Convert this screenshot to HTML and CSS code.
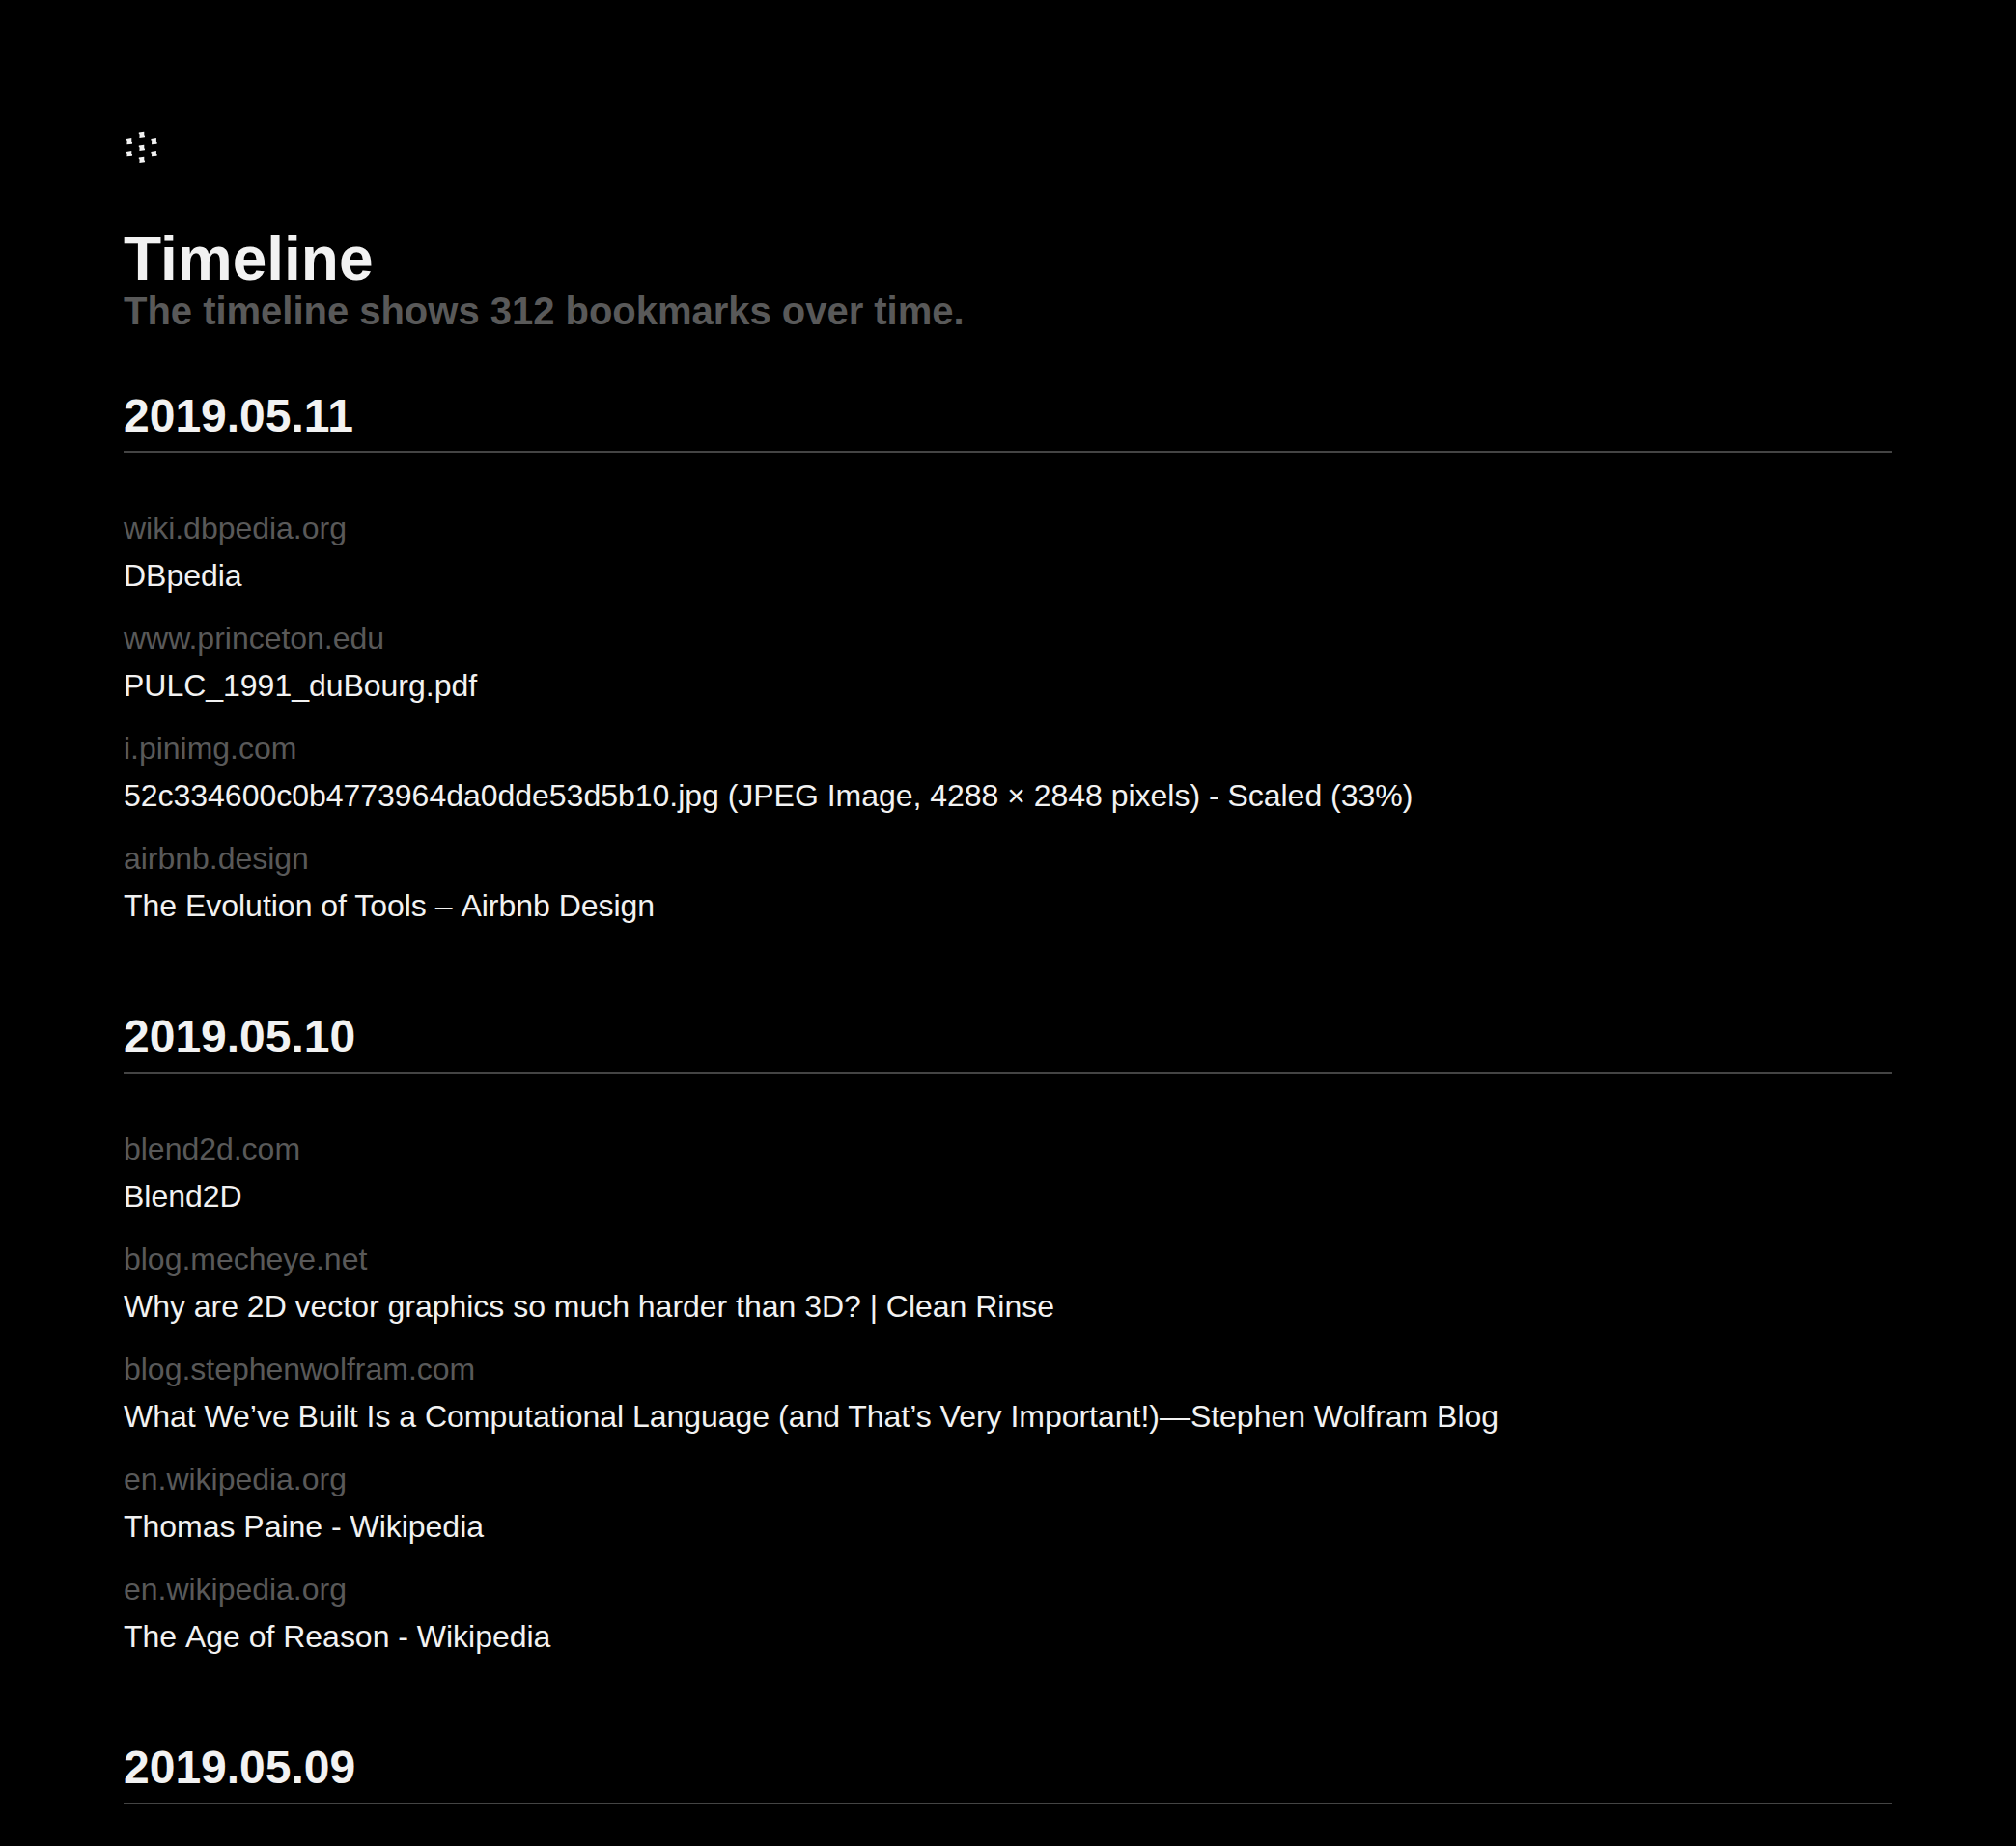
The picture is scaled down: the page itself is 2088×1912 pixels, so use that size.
FILE: index.html
```html
<!DOCTYPE html>
<html lang="en">
<head>
<meta charset="utf-8">
<title>Timeline</title>
<link rel="stylesheet" href="styles.css">
</head>
<body>
<main class="page">
  <header class="header">
    <svg class="logo" viewBox="0 0 36 34" role="img" aria-label="Home">
      <defs><path id="dot" d="M-3.1-2.3 2.4-3.1 2.4.6 3.2 1 3 2.5-2.5 3.1-2.3-.4-3.1-.8Z"/></defs>
      <use href="#dot" x="18.9" y="3.8"/>
      <use href="#dot" x="5.9" y="10.2"/>
      <use href="#dot" x="31.5" y="10.2"/>
      <use href="#dot" x="18.9" y="16.8"/>
      <use href="#dot" x="5.9" y="23.2"/>
      <use href="#dot" x="31.5" y="23.2"/>
      <use href="#dot" x="18.9" y="29.8"/>
    </svg>
    <h1 class="title">Timeline</h1>
    <p class="subtitle">The timeline shows 312 bookmarks over time.</p>
  </header>

  <section class="day">
    <h2 class="date">2019.05.<span class="pair">1</span>1</h2>
    <ul class="links">
      <li class="link"><span class="domain">wiki.dbpedia.org</span><a class="name">DBpedia</a></li>
      <li class="link"><span class="domain">www.princeton.edu</span><a class="name">PULC_1991_duBourg.pdf</a></li>
      <li class="link"><span class="domain">i.pinimg.com</span><a class="name">52c334600c0b4773964da0dde53d5b10.jpg (JPEG Image, 4288 × 2848 pixels) - Scaled (33%)</a></li>
      <li class="link"><span class="domain">airbnb.design</span><a class="name">The Evolution of Tools –<span class="space"> </span>Airbnb Design</a></li>
    </ul>
  </section>

  <section class="day">
    <h2 class="date">2019.05.10</h2>
    <ul class="links">
      <li class="link"><span class="domain">blend2d.com</span><a class="name">Blend2D</a></li>
      <li class="link"><span class="domain">blog.mecheye.net</span><a class="name">Why are 2D vector graphics so much harder than 3D? | Clean Rinse</a></li>
      <li class="link"><span class="domain">blog.stephenwolfram.com</span><a class="name">What We’ve Built Is a Computational Language (and That’s Very Important!)—Stephen Wolfram Blog</a></li>
      <li class="link"><span class="domain">en.wikipedia.org</span><a class="name">Thomas Paine - Wikipedia</a></li>
      <li class="link"><span class="domain">en.wikipedia.org</span><a class="name">The<span class="space"> </span>Age of Reason - Wikipedia</a></li>
    </ul>
  </section>

  <section class="day">
    <h2 class="date">2019.05.09</h2>
  </section>
</main>
</body>
</html>
```
FILE: styles.css
```css
* {
  box-sizing: border-box;
  margin: 0;
  padding: 0;
}

body {
  background: #000;
  color: #f2f2f2;
  font-family: "Liberation Sans", Helvetica, Arial, sans-serif;
  font-size: 32px;
  line-height: 49px;
}

.page {
  height: 1912px;
  padding: 136px 128px 0;
  overflow: hidden;
}

.header {
  display: flex;
  flex-direction: column;
  align-items: flex-start;
  margin-bottom: 60px;
}

.logo {
  width: 36px;
  height: 34px;
  margin-bottom: 66px;
  fill: #f2f2f2;
}

.title {
  font-size: 64px;
  line-height: 64px;
}

.subtitle {
  margin-top: 2px;
  color: #595959;
  font-size: 40px;
  font-weight: bold;
  line-height: 40px;
  letter-spacing: -0.02px;
}

.day {
  margin-bottom: 82px;
}

.date {
  padding: 1px 0 8px;
  border-bottom: 2px solid #444;
  font-size: 48px;
  line-height: 56px;
}

/* Tightens a pair of ones. */
.pair {
  letter-spacing: -2.4px;
}

.links {
  display: flex;
  flex-direction: column;
  gap: 16px;
  padding-top: 54px;
  list-style: none;
}

.link {
  display: flex;
  flex-direction: column;
  align-items: flex-start;
  letter-spacing: -0.02px;
}

.domain {
  color: #595959;
}

/* Keeps the space before a capital A from being kerned. */
.space {
  letter-spacing: 0;
}
```
